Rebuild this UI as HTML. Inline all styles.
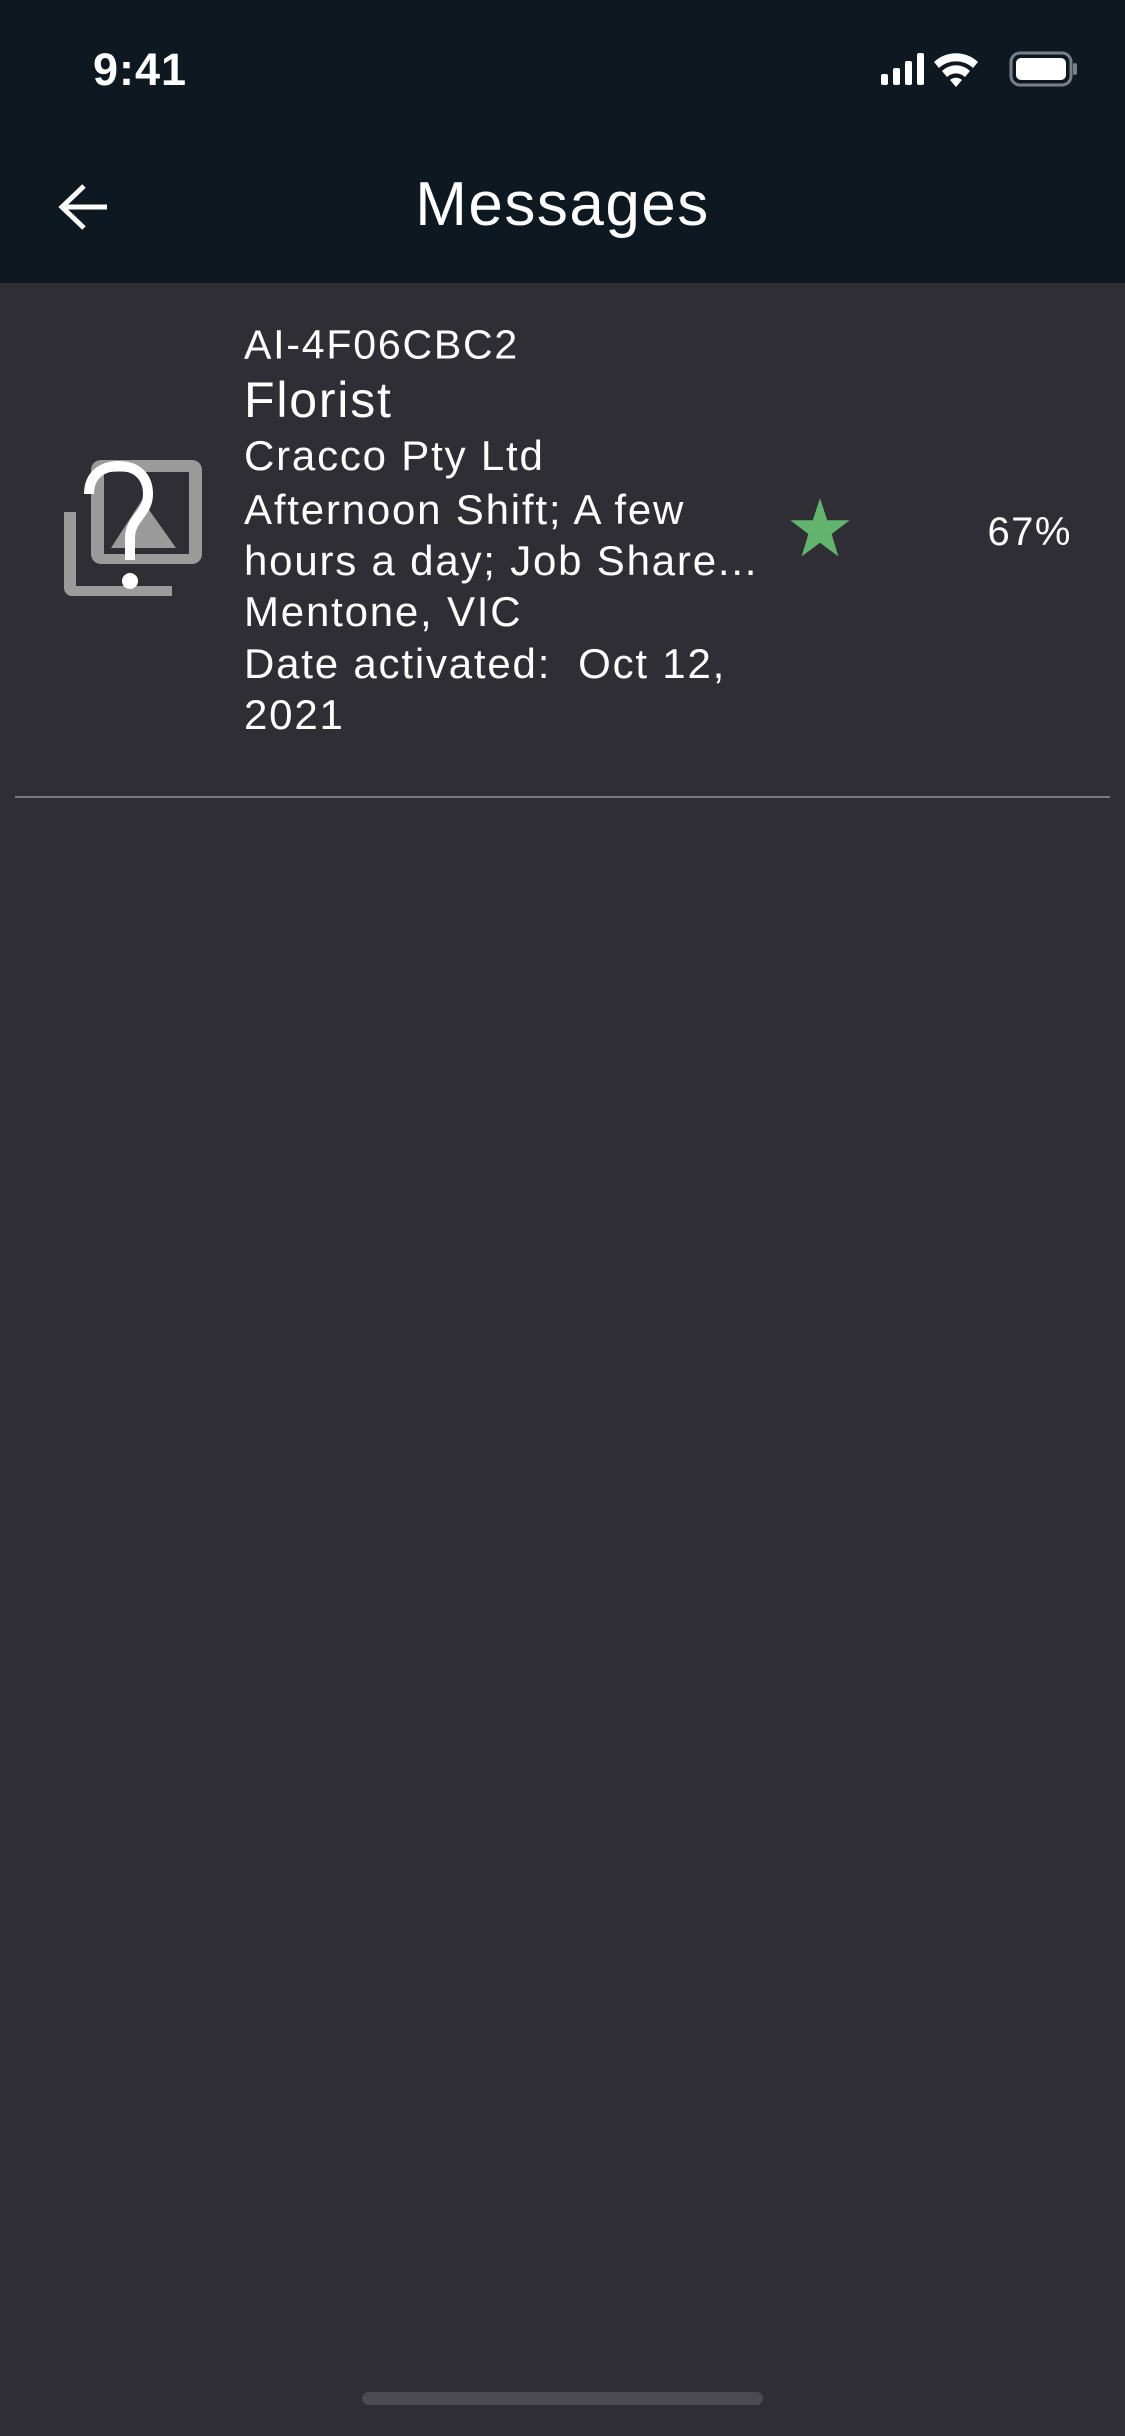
<!DOCTYPE html>
<html><head><meta charset="utf-8"><style>
*{margin:0;padding:0;box-sizing:border-box}
body{width:1125px;height:2436px;background:#2f2e34;font-family:"Liberation Sans",sans-serif;color:#fff;position:relative;overflow:hidden}
.hdr{position:absolute;left:0;top:0;width:1125px;height:283px;background:#0d1821}
.t{position:absolute;white-space:nowrap;line-height:1}
.l{position:absolute;left:244px;white-space:nowrap;font-size:42px;letter-spacing:1.8px;line-height:1;transform:translateY(-50%)}
</style></head><body>
<div class="hdr"></div>
<div class="t" style="left:93px;top:47px;font-size:45px;font-weight:bold;letter-spacing:1px">9:41</div>
<svg style="position:absolute;left:878px;top:50px" width="200" height="40" viewBox="0 0 200 40">
<rect x="3" y="24" width="7" height="11" rx="2" fill="#fff"/>
<rect x="15" y="18" width="7" height="17" rx="2" fill="#fff"/>
<rect x="27" y="11" width="7" height="24" rx="2" fill="#fff"/>
<rect x="39" y="3" width="7" height="32" rx="2" fill="#fff"/>
<path d="M56 12 A32 32 0 0 1 100 12 L95 18 A25 25 0 0 0 61 18Z M64 21 A20 20 0 0 1 92 21 L87 27 A13 13 0 0 0 69 27Z M72 30 A9 9 0 0 1 84 30 L78 37Z" fill="#fff"/>
<rect x="133" y="3" width="60" height="32" rx="9" fill="none" stroke="#7a8088" stroke-width="3"/>
<rect x="138" y="8" width="50" height="22" rx="5" fill="#fff"/>
<rect x="195" y="13" width="4" height="12" rx="2" fill="#7a8088"/>
</svg>
<svg style="position:absolute;left:57px;top:182px" width="54" height="50" viewBox="0 0 54 50"><path d="M50 25H6M27 4L5 25L27 46" fill="none" stroke="#fff" stroke-width="5"/></svg>
<div class="t" style="left:0;width:1125px;text-align:center;top:174px;font-size:62px;letter-spacing:1.5px">Messages</div>

<svg style="position:absolute;left:64px;top:460px" width="138" height="136" viewBox="0 0 138 136">
<path d="M0 52V128a8 8 0 0 0 8 8H108V126H12V52Z" fill="#9b9b9b"/>
<rect x="27" y="0" width="111" height="104" rx="10" fill="#9b9b9b"/>
<rect x="40" y="12" width="85" height="82" fill="#2f2e34"/>
<path d="M47 88L78 40L112 88Z" fill="#9b9b9b"/>
<path d="M25 34C25 16 37 6 55 6C73 6 84 17 84 34C84 54 66 58 66 78V100" fill="none" stroke="#fff" stroke-width="10"/>
<circle cx="66" cy="121" r="8" fill="#fff"/>
</svg>

<div class="l" style="top:345px;font-size:41px">AI-4F06CBC2</div>
<div class="l" style="top:400px;font-size:50px">Florist</div>
<div class="l" style="top:456px">Cracco Pty Ltd</div>
<div class="l" style="top:510px">Afternoon Shift; A few</div>
<div class="l" style="top:561px">hours a day; Job Share...</div>
<div class="l" style="top:612px">Mentone, VIC</div>
<div class="l" style="top:664px">Date activated:&nbsp; Oct 12,</div>
<div class="l" style="top:715px">2021</div>

<svg style="position:absolute;left:789px;top:498px" width="62" height="60" viewBox="0 0 24 23"><path d="M12 0L14.8 8.5H23.5L16.5 13.8L19.1 22.5L12 17.2L4.9 22.5L7.5 13.8L0.5 8.5H9.2Z" fill="#62b36e"/></svg>
<div class="t" style="right:53px;top:512px;font-size:40px;letter-spacing:1.5px">67%</div>

<div style="position:absolute;left:15px;top:796px;width:1095px;height:2px;background:#7a797e"></div>
<div style="position:absolute;left:362px;top:2392px;width:401px;height:13px;border-radius:7px;background:#4b4a50"></div>
</body></html>
